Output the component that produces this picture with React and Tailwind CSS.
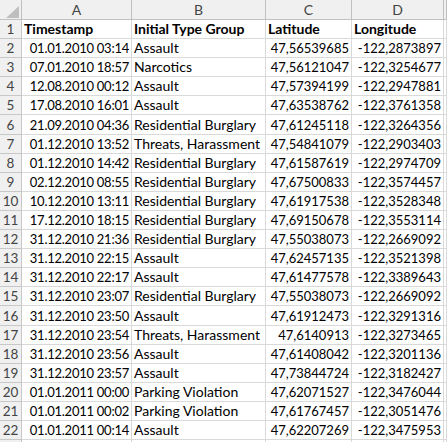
import React from "react";

const rows = [
  ["01.01.2010 03:14", "Assault", "47,56539685", "-122,2873897"],
  ["07.01.2010 18:57", "Narcotics", "47,56121047", "-122,3254677"],
  ["12.08.2010 00:12", "Assault", "47,57394199", "-122,2947881"],
  ["17.08.2010 16:01", "Assault", "47,63538762", "-122,3761358"],
  ["21.09.2010 04:36", "Residential Burglary", "47,61245118", "-122,3264356"],
  ["01.12.2010 13:52", "Threats, Harassment", "47,54841079", "-122,2903403"],
  ["01.12.2010 14:42", "Residential Burglary", "47,61587619", "-122,2974709"],
  ["02.12.2010 08:55", "Residential Burglary", "47,67500833", "-122,3574457"],
  ["10.12.2010 13:11", "Residential Burglary", "47,61917538", "-122,3528348"],
  ["17.12.2010 18:15", "Residential Burglary", "47,69150678", "-122,3553114"],
  ["31.12.2010 21:36", "Residential Burglary", "47,55038073", "-122,2669092"],
  ["31.12.2010 22:15", "Assault", "47,62457135", "-122,3521398"],
  ["31.12.2010 22:17", "Assault", "47,61477578", "-122,3389643"],
  ["31.12.2010 23:07", "Residential Burglary", "47,55038073", "-122,2669092"],
  ["31.12.2010 23:50", "Assault", "47,61912473", "-122,3291316"],
  ["31.12.2010 23:54", "Threats, Harassment", "47,6140913", "-122,3273465"],
  ["31.12.2010 23:56", "Assault", "47,61408042", "-122,3201136"],
  ["31.12.2010 23:57", "Assault", "47,73844724", "-122,3182427"],
  ["01.01.2011 00:00", "Parking Violation", "47,62071527", "-122,3476044"],
  ["01.01.2011 00:02", "Parking Violation", "47,61767457", "-122,3051476"],
  ["01.01.2011 00:14", "Assault", "47,62207269", "-122,3475953"],
];

const cols = "grid grid-cols-[22px_110px_134px_86px_92px_1fr]";
const cell = "border-r border-b border-[#d9d9d9] flex items-end pb-[1px] overflow-hidden whitespace-nowrap";
const rowNum = "bg-[#f0f0f0] border-r border-b border-[#c8c8c8] flex items-end justify-center pb-[1px] text-[#444] text-[13.5px]";

export default function App() {
  return (
    <div
      className="w-[447px] h-[442px] overflow-hidden bg-white text-[13px] leading-[16px] text-black"
      style={{ fontFamily: "Lato, 'Liberation Sans', sans-serif" }}
    >
      <div className={`${cols} h-[20px] bg-[#f0f0f0] text-[#444] text-[14px]`}>
        <div className="border-r border-b border-[#c0c0c0] relative">
          <svg className="absolute left-[6px] top-[6px]" width="13" height="12" viewBox="0 0 13 12">
            <polygon points="13,0 13,12 0,12" fill="#bfbfbf" />
          </svg>
        </div>
        {["A", "B", "C", "D", ""].map((l, i) => (
          <div key={i} className="border-r border-b border-[#c0c0c0] flex items-center justify-center">
            {l}
          </div>
        ))}
      </div>
      <div className={`${cols} h-[19.1px] text-[14px]`}>
        <div className={rowNum}>1</div>
        <div className={`${cell} pl-[2px] font-bold`}>Timestamp</div>
        <div className={`${cell} pl-[2px] font-bold`}>Initial Type Group</div>
        <div className={`${cell} pl-[2px] font-bold`}>Latitude</div>
        <div className={`${cell} pl-[2px] font-bold`}>Longitude</div>
        <div className={cell}></div>
      </div>
      {rows.map((r, i) => (
        <div key={i} className={`${cols} h-[19.1px]`}>
          <div className={rowNum}>{i + 2}</div>
          <div className={`${cell} justify-end pr-[2px] tracking-[-0.25px]`}>{r[0]}</div>
          <div className={`${cell} pl-[2px] text-[14px]`}>{r[1]}</div>
          <div className={`${cell} justify-end pr-[2px]`}>{r[2]}</div>
          <div className={`${cell} justify-end pr-[2px]`}>{r[3]}</div>
          <div className={cell}></div>
        </div>
      ))}
      <div className={`${cols} h-[19.1px]`}>
        <div className={rowNum}></div>
        <div className={cell}></div>
        <div className={cell}></div>
        <div className={cell}></div>
        <div className={cell}></div>
        <div className={cell}></div>
      </div>
    </div>
  );
}
